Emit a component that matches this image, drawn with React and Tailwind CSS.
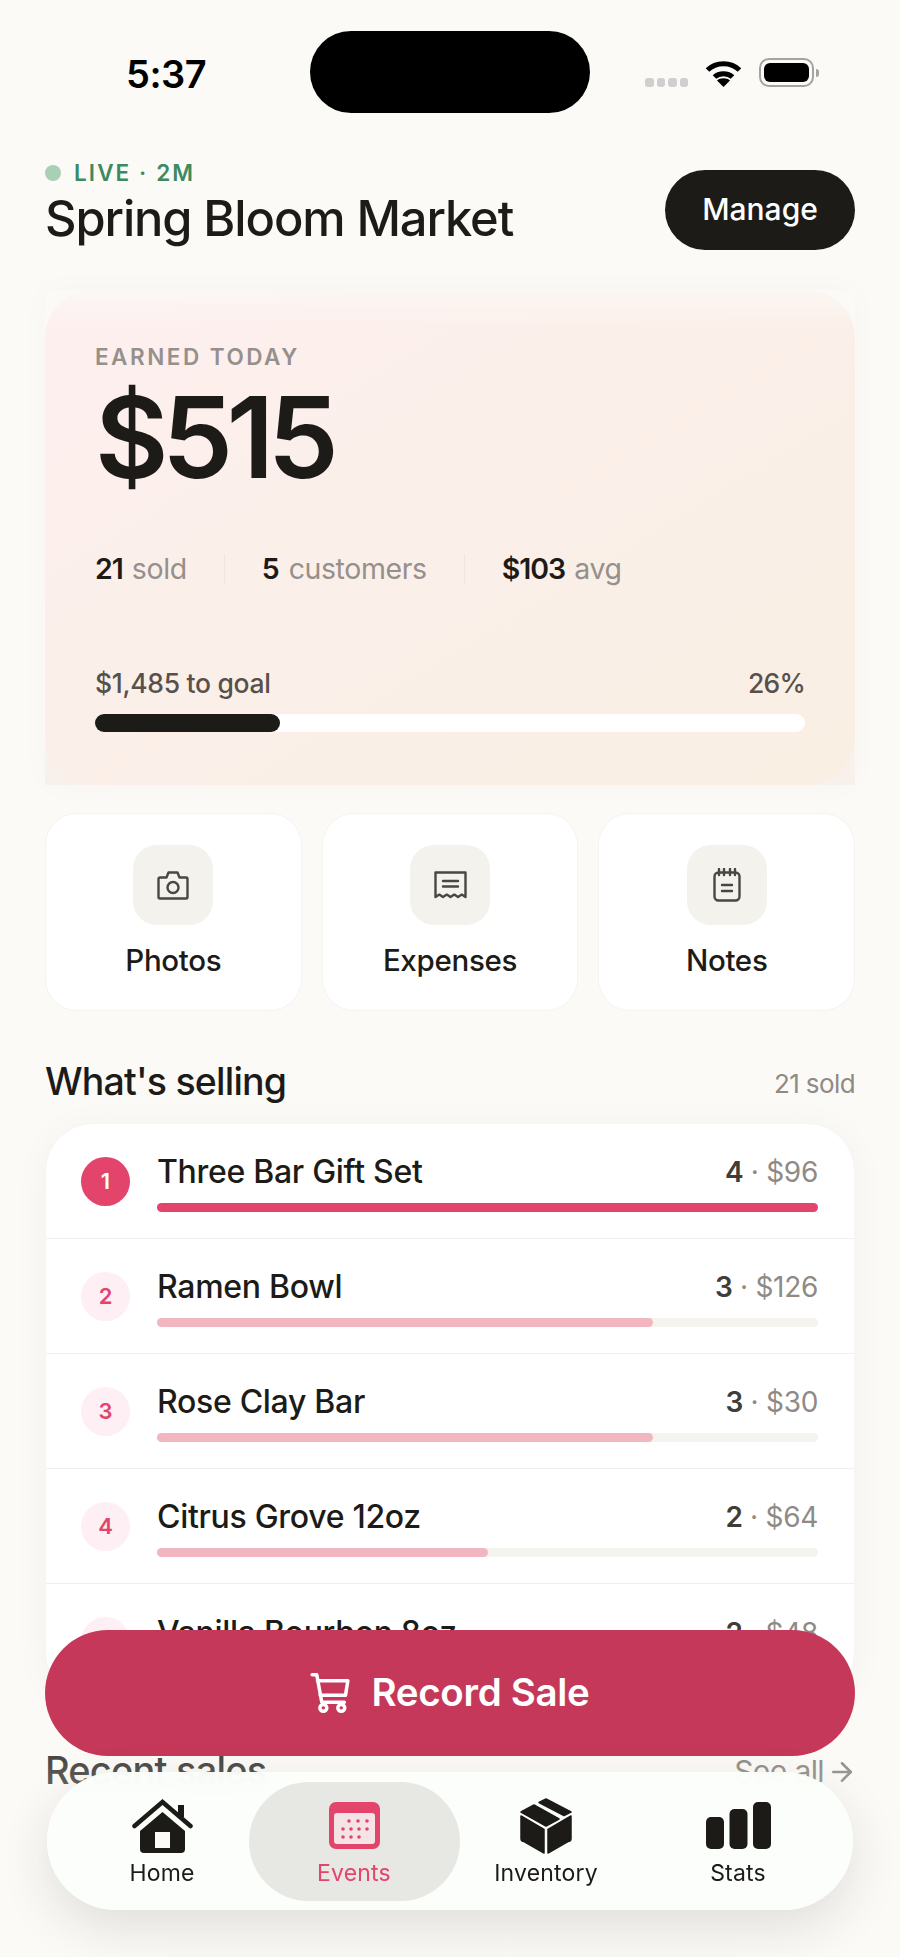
import { ArrowRight } from 'lucide-react';

const items = [
    { rank: 1, name: 'Three Bar Gift Set', qty: 4, total: '$96', pct: 100 },
    { rank: 2, name: 'Ramen Bowl', qty: 3, total: '$126', pct: 75 },
    { rank: 3, name: 'Rose Clay Bar', qty: 3, total: '$30', pct: 75 },
    { rank: 4, name: 'Citrus Grove 12oz', qty: 2, total: '$64', pct: 50 },
    { rank: 5, name: 'Vanilla Bourbon 8oz', qty: 2, total: '$48', pct: 50 },
];

const CameraIcon = () => (
    <svg width="32" height="29" viewBox="0 0 32 29" fill="none" stroke="#4a4642" strokeWidth="2.4" strokeLinejoin="round">
        <path d="M3 6.5h6.5l2-5h9l2 5H29a1.5 1.5 0 0 1 1.5 1.5v18a1.5 1.5 0 0 1-1.5 1.5H3A1.5 1.5 0 0 1 1.5 26V8A1.5 1.5 0 0 1 3 6.5Z" />
        <circle cx="16" cy="16.5" r="5.5" />
    </svg>
);

const ReceiptIcon = () => (
    <svg width="33" height="28" viewBox="0 0 33 28" fill="none" stroke="#4a4642" strokeWidth="2.4" strokeLinejoin="round" strokeLinecap="round">
        <path d="M1.5 26V1.5h30V26l-3.7-2.4-3.8 2.4-3.7-2.4-3.8 2.4-3.7-2.4-3.8 2.4-3.7-2.4Z" />
        <path d="M9 10h15M9 15.5h15" />
    </svg>
);

const NotepadIcon = () => (
    <svg width="28" height="34" viewBox="0 0 28 34" fill="none" stroke="#4a4642" strokeWidth="2.4" strokeLinecap="round">
        <rect x="1.5" y="4.5" width="25" height="28" rx="4" />
        <path d="M6 1v6M11 1v6M17 1v6M22 1v6M9 17h10M9 23h10" />
    </svg>
);

const WifiIcon = () => (
    <svg width="37" height="28" viewBox="0 0 37 28" fill="none">
        <path d="M2.5 11C11 2.5 26 2.5 34.5 11" stroke="#000" strokeWidth="5" />
        <path d="M9.5 18C14 13.5 23 13.5 27.5 18" stroke="#000" strokeWidth="5" />
        <path d="M18.5 28 12 21.5C15 18.5 22 18.5 25 21.5Z" fill="#000" />
    </svg>
);

const HomeIcon = () => (
    <svg width="61" height="54" viewBox="0 0 61 54">
        <path d="M30.5 13 8 32v18a4 4 0 0 0 4 4h37a4 4 0 0 0 4-4V32Z" fill="#1c1b18" />
        <rect x="23" y="33" width="15" height="16" fill="#fbfcf9" />
        <path d="M2.5 27 30.5 3l28 24" fill="none" stroke="#1c1b18" strokeWidth="4.5" strokeLinecap="round" />
        <rect x="46" y="6" width="6" height="12" fill="#1c1b18" />
    </svg>
);

const CalendarIcon = () => {
    const dots = [
        [20, 19], [29, 19], [38, 19],
        [14, 27], [22, 27], [30, 27], [38, 27],
        [14, 35], [22, 35], [30, 35],
    ];
    return (
        <svg width="51" height="47" viewBox="0 0 51 47">
            <rect width="51" height="47" rx="7" fill="#e2446c" />
            <rect x="5" y="11" width="41" height="31" rx="3" fill="#f4e4e6" />
            {dots.map(([cx, cy]) => (
                <circle key={`${cx}-${cy}`} cx={cx} cy={cy} r="1.8" fill="#e2446c" />
            ))}
        </svg>
    );
};

const BoxIcon = () => (
    <svg width="52" height="56" viewBox="0 0 52 56" fill="#1c1b18" stroke="#1c1b18" strokeWidth="1.5" strokeLinejoin="round">
        <path d="M26 1 51 14l-7 3.500L19 4.500Z" />
        <path d="M14 7 39 21l-13 7L1 14Z" />
        <path d="M1 18 24 31.500V55L4 43.500a3 3 0 0 1-3-3Z" />
        <path d="M51 18 28 31.500V55l20-11.500a3 3 0 0 0 3-3Z" />
    </svg>
);

const StatsIcon = () => (
    <svg width="65" height="47" viewBox="0 0 65 47" fill="#1c1b18">
        <rect x="0" y="15" width="18" height="32" rx="5" />
        <rect x="23.500" y="7" width="18" height="40" rx="5" />
        <rect x="47" y="0" width="18" height="47" rx="5" />
    </svg>
);

const CartIcon = () => (
    <svg width="40" height="40" viewBox="0 0 38 39" fill="none" stroke="#fff" strokeWidth="3.400" strokeLinecap="round" strokeLinejoin="round">
        <path d="M1.600 1.800h4.500l4.900 26.700h22" />
        <path d="M6.800 7.500h29.600l-2.300 14.300H9.500" />
        <circle cx="12.500" cy="34" r="3.400" />
        <circle cx="30" cy="34" r="3.400" />
    </svg>
);

const tiles = [
    { label: 'Photos', icon: <CameraIcon /> },
    { label: 'Expenses', icon: <ReceiptIcon /> },
    { label: 'Notes', icon: <NotepadIcon /> },
];

const tabs = [
    { label: 'Home', icon: <HomeIcon /> },
    { label: 'Events', icon: <CalendarIcon />, active: true },
    { label: 'Inventory', icon: <BoxIcon /> },
    { label: 'Stats', icon: <StatsIcon /> },
];

const App = () => {
    return (
        <div className="relative w-[900px] h-[1957px] overflow-hidden bg-[#fbfaf7] px-[45px] text-[#1c1b18] font-['Inter','Liberation_Sans',sans-serif]">
            {/* status bar */}
            <div className="flex h-[113px] pt-[31px]">
                <div className="w-[265px] pl-[81px] pt-[21px] text-[38px] leading-[44px] font-semibold tracking-[-0.5px] text-black">5:37</div>
                <div className="w-[280px] h-[82px] rounded-full bg-black" />
                <div className="flex items-start pl-[55px]">
                    <div className="flex gap-[3px] mt-[47px]">
                        <span className="w-[8.5px] h-[9px] rounded-[3px] bg-[#cfcfcf]" />
                        <span className="w-[8.5px] h-[9px] rounded-[3px] bg-[#cfcfcf]" />
                        <span className="w-[8.5px] h-[9px] rounded-[3px] bg-[#cfcfcf]" />
                        <span className="w-[8.5px] h-[9px] rounded-[3px] bg-[#cfcfcf]" />
                    </div>
                    <div className="ml-[17px] mt-[28px]"><WifiIcon /></div>
                    <div className="ml-[17px] mt-[27px] flex items-center">
                        <div className="w-[55px] h-[29px] rounded-[10px] border-[2.5px] border-[#a3a3a3] p-[3px]">
                            <div className="w-full h-full rounded-[6px] bg-black" />
                        </div>
                        <div className="w-[3px] h-[8px] rounded-r-full bg-[#a3a3a3] ml-[2px]" />
                    </div>
                </div>
            </div>

            {/* header */}
            <div className="flex justify-between items-start pt-[47px] h-[177px]">
                <div>
                    <div className="flex items-center gap-[13px] h-[26px] text-[#3d8a5f] text-[22.5px] font-semibold tracking-[2.1px]">
                        <span className="w-[16px] h-[16px] rounded-full bg-[#a9cfb4]" />
                        <span>LIVE · 2M</span>
                    </div>
                    <h1 className="mt-[4px] text-[48.8px] leading-[58px] font-medium tracking-[-1.1px]">Spring Bloom Market</h1>
                </div>
                <button className="mt-[10px] w-[190px] h-[80px] rounded-full bg-[#1c1b18] text-white text-[30px] font-medium pb-[2px]">Manage</button>
            </div>

            {/* earnings card */}
            <div className="relative h-[495px] bg-gradient-to-b from-[#fbfaf7] via-[#fbf7f3] to-[#f8f1eb] shadow-[0_0_30px_rgba(60,40,30,0.025)]">
                <div className="h-full rounded-[48px] bg-gradient-to-br from-[#fdefef] to-[#f9efe3] px-[50px] pt-[52px]">
                    <div className="text-[#96908c] text-[22.5px] leading-[30px] font-semibold tracking-[2.5px]">EARNED TODAY</div>
                    <div className="mt-[7px] text-[113px] leading-[116px] font-semibold tracking-[-6.5px]">$515</div>
                    <div className="mt-[56px] flex items-center h-[36px] text-[28.5px]">
                        <span className="font-semibold tracking-[-1px]">21</span>
                        <span className="ml-[9px] text-[#96908c] tracking-[-0.4px]">sold</span>
                        <span className="w-px h-[30px] bg-[#efe6e0] mx-[37px]" />
                        <span className="font-semibold">5</span>
                        <span className="ml-[9px] text-[#96908c] tracking-[-0.4px]">customers</span>
                        <span className="w-px h-[30px] bg-[#efe6e0] mx-[37px]" />
                        <span className="font-semibold tracking-[-1px]">$103</span>
                        <span className="ml-[9px] text-[#96908c] tracking-[-0.4px]">avg</span>
                    </div>
                    <div className="mt-[80px] flex justify-between text-[#57504b] text-[26.5px] leading-[32px] font-medium tracking-[-0.3px]">
                        <span>$1,485 to goal</span>
                        <span className="tracking-[-0.8px]">26%</span>
                    </div>
                    <div className="mt-[15px] h-[18px] rounded-full bg-white">
                        <div className="h-full w-[26%] rounded-full bg-[#1c1b18]" />
                    </div>
                </div>
                {/* the top edge melts into the page */}
                <div className="absolute inset-x-0 top-0 h-[40px] bg-gradient-to-b from-[#fbfaf7]/70 to-[#fbfaf7]/0" />
            </div>

            {/* quick actions */}
            <div className="mt-[28px] flex gap-[20px]">
                {tiles.map((tile) => (
                    <div key={tile.label} className="flex-1 h-[198px] rounded-[32px] bg-white border border-[#f5f4f0] flex flex-col items-center pt-[31px]">
                        <div className="w-[80px] h-[80px] rounded-[24px] bg-[#f4f2ec] flex items-center justify-center">{tile.icon}</div>
                        <div className="mt-[17px] text-[29.5px] leading-[36px] font-medium tracking-[-0.3px]">{tile.label}</div>
                    </div>
                ))}
            </div>

            {/* what's selling */}
            <div className="mt-[47px] flex justify-between items-center h-[48px]">
                <h2 className="text-[37.5px] leading-[48px] font-medium tracking-[-0.8px]">What's selling</h2>
                <span className="text-[#8f8a85] text-[26px] leading-[38px] tracking-[-0.6px] mt-[4px]">21 sold</span>
            </div>
            <div className="mt-[17px] rounded-[48px] bg-white shadow-[0_4px_36px_rgba(40,30,20,0.04)] border border-[#f6f5f1]">
                {items.map((item) => (
                    <div key={item.rank} className="h-[115px] flex items-center gap-[27px] pl-[35px] pr-[36px] border-b border-[#f0efeb] last:border-b-0">
                        <div className={item.rank === 1
                            ? 'w-[49px] h-[49px] shrink-0 rounded-full flex items-center justify-center bg-[#e2446c] text-white text-[22px] font-semibold'
                            : 'w-[49px] h-[49px] shrink-0 rounded-full flex items-center justify-center bg-[#fdeff3] text-[#e2446c] text-[22px] font-semibold'}>
                            {item.rank}
                        </div>
                        <div className="flex-1 mt-[3px]">
                            <div className="flex justify-between items-center h-[38px] text-[32px] font-medium tracking-[-0.3px]">
                                <span>{item.name}</span>
                                <span className="text-[28px] font-semibold text-[#403d39]">
                                    {item.qty}
                                    <span className="font-normal text-[#8f8a85]"> · {item.total}</span>
                                </span>
                            </div>
                            <div className="mt-[12px] h-[9px] rounded-full bg-[#f4f3ee]">
                                <div
                                    className={item.rank === 1 ? 'h-full rounded-full bg-[#e2446c]' : 'h-full rounded-full bg-[#f2b6c1]'}
                                    style={{ width: `${item.pct}%` }}
                                />
                            </div>
                        </div>
                    </div>
                ))}
            </div>

            {/* recent sales, mostly hidden behind the floating bar */}
            <div className="mt-[45px] flex justify-between items-center">
                <h2 className="text-[38px] leading-[48px] font-medium tracking-[-0.8px]">Recent sales</h2>
                <span className="flex items-center gap-[3px] -mr-[2px] text-[#77726d] text-[30px] tracking-[-0.6px] mt-[4px]">
                    See all
                    <ArrowRight size={30} strokeWidth={2} />
                </span>
            </div>

            {/* fade under the floating controls */}
            <div className="absolute inset-x-0 bottom-0 h-[250px] bg-gradient-to-b from-[#fbfaf7]/0 via-[#fbfaf7]/50 to-[#fbfaf7]" />

            <button className="absolute left-[45px] bottom-[201px] w-[810px] h-[126px] rounded-full bg-[#c5385a] text-white flex items-center justify-center gap-[21px] text-[38.5px] font-semibold tracking-[-0.3px]">
                <CartIcon />
                Record Sale
            </button>

            {/* tab bar */}
            <nav className="absolute left-[47px] bottom-[47px] w-[806px] h-[138px] rounded-[69px] bg-[#fcfefb]/95 backdrop-blur-md shadow-[0_18px_50px_rgba(40,35,30,0.12)] flex items-center px-[19px]">
                {tabs.map((tab) => (
                    <div
                        key={tab.label}
                        className={tab.active
                            ? 'w-[211px] -mx-[9.5px] h-[119px] rounded-[60px] bg-[#e7e7e3] flex flex-col items-center text-[#e2446c]'
                            : 'w-[192px] h-[119px] flex flex-col items-center'}
                    >
                        <div className="h-[78px] flex items-center justify-center pt-[10px]">{tab.icon}</div>
                        <div className="text-[23px] leading-[26px] font-normal tracking-[0.2px]">{tab.label}</div>
                    </div>
                ))}
            </nav>
        </div>
    );
};

export default App;
